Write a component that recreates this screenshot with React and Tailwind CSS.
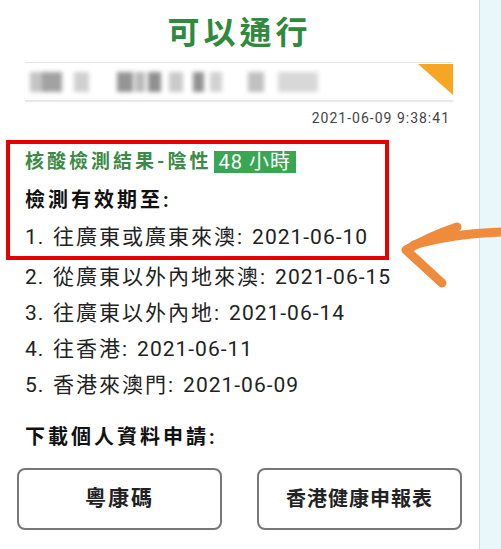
import React from 'react';

const font = { fontFamily: 'Roboto, "Noto Sans CJK TC", "Noto Sans CJK SC", sans-serif' };

const validity = [
  ['2.', '從廣東以外內地來澳', '2021-06-15'],
  ['3.', '往廣東以外內地', '2021-06-14'],
  ['4.', '往香港', '2021-06-11'],
  ['5.', '香港來澳門', '2021-06-09'],
];

function Row({ num, label, date, className = '' }) {
  return (
    <div className={`flex items-center h-[36px] text-[21px] text-[#222] tracking-[1px] ${className}`}>
      <span className="w-[28px]">{num}</span>
      <span className="tracking-[2px]">{label}</span>
      <span>:</span>
      <span className="ml-[9px]">{date}</span>
    </div>
  );
}

// pixelated blur standing in for the masked name
const blocks = [
  ['ml-[5px] w-[12px]', 'bg-[#c4c4c4]'],
  ['w-[20px]', 'bg-[#a2a2a2]'],
  ['ml-[12px] w-[15px]', 'bg-[#d0d0d0]'],
  ['ml-[28px] w-[16px]', 'bg-[#959595]'],
  ['ml-[2px] w-[10px]', 'bg-[#b9b9b9]'],
  ['ml-[3px] w-[13px]', 'bg-[#909090]'],
  ['ml-[8px] w-[14px]', 'bg-[#cacaca]'],
  ['ml-[10px] w-[11px]', 'bg-[#929292]'],
  ['ml-[6px] w-[12px]', 'bg-[#d2d2d2]'],
  ['ml-[26px] w-[16px]', 'bg-[#c0c0c0]'],
  ['ml-[14px] w-[40px]', 'bg-[#d8d8d8]'],
];

export default function App() {
  return (
    <div className="relative flex w-[501px] h-[549px] overflow-hidden bg-white" style={font}>
      {/* main card */}
      <div className="w-[479px] h-full bg-white flex flex-col">
        <h1 className="pt-[13px] h-[53px] leading-[40px] text-center text-[32px] font-bold tracking-[4px] text-[#2f8a3c]">
          可以通行
        </h1>

        {/* masked name bar */}
        <div className="relative mt-[9px] ml-[25px] w-[428px] h-[39px] border-t border-b border-[#e6e6e6] shadow-[0_1px_1px_rgba(0,0,0,0.08)] flex items-center">
          <div className="flex items-stretch h-[20px] blur-[2px]">
            {blocks.map(([w, c], i) => (
              <div key={i} className={`${w} ${c}`}></div>
            ))}
          </div>
          <svg className="absolute top-[1px] right-0" width="35" height="31" viewBox="0 0 35 31">
            <polygon points="0,0 35,0 35,31" fill="#f5a623" />
          </svg>
        </div>

        <div className="mt-[9px] h-[16px] leading-[16px] pr-[29px] text-right text-[14px] tracking-[1px] text-[#444]">
          2021-06-09 9:38:41
        </div>

        {/* highlighted result */}
        <div className="mt-[14px] ml-[6px] w-[383px] border-[4px] border-[#e60000] pl-[15px]">
          <div className="flex items-center h-[36px]">
            <span className="text-[19px] font-bold tracking-[3px] text-[#3c8a45]">核酸檢測結果-陰性</span>
            <span className="ml-[2px] h-[22px] leading-[22px] px-[5px] bg-[#38a652] text-white text-[20px] tracking-[1px]">
              48 小時
            </span>
          </div>
          <div className="flex items-center h-[40px] text-[20px] font-bold tracking-[3px] text-[#111]">
            檢測有效期至:
          </div>
          <Row num="1." label="往廣東或廣東來澳" date="2021-06-10" className="h-[33px]" />
        </div>

        <div className="pl-[25px]">
          {validity.map(([n, l, d]) => (
            <Row key={n} num={n} label={l} date={d} />
          ))}
        </div>

        <div className="mt-[15px] pl-[25px] h-[36px] flex items-center text-[20px] font-bold tracking-[3px] text-[#111]">
          下載個人資料申請:
        </div>

        <div className="mt-[13px] pl-[17px] flex gap-[35px]">
          <button className="w-[205px] h-[62px] rounded-lg border-2 border-[#777] text-[21px] font-bold tracking-[2px] text-[#222]">
            粵康碼
          </button>
          <button className="w-[205px] h-[62px] rounded-lg border-2 border-[#777] text-[20px] font-bold tracking-[1px] text-[#222]">
            香港健康申報表
          </button>
        </div>
      </div>

      {/* side strip */}
      <div className="flex-1 h-full border-l border-[#d6dde0] bg-[#eaf7fa]"></div>

      {/* hand-drawn arrow */}
      <svg className="absolute inset-0 pointer-events-none" width="501" height="549" viewBox="0 0 501 549">
        <g fill="none" stroke="#ef8b3d" strokeWidth="9" strokeLinecap="round" strokeLinejoin="round">
          <path d="M457 227 Q430 236 406 250 L442 283" />
          <path d="M414 245 Q450 234 501 232" />
        </g>
      </svg>
    </div>
  );
}
